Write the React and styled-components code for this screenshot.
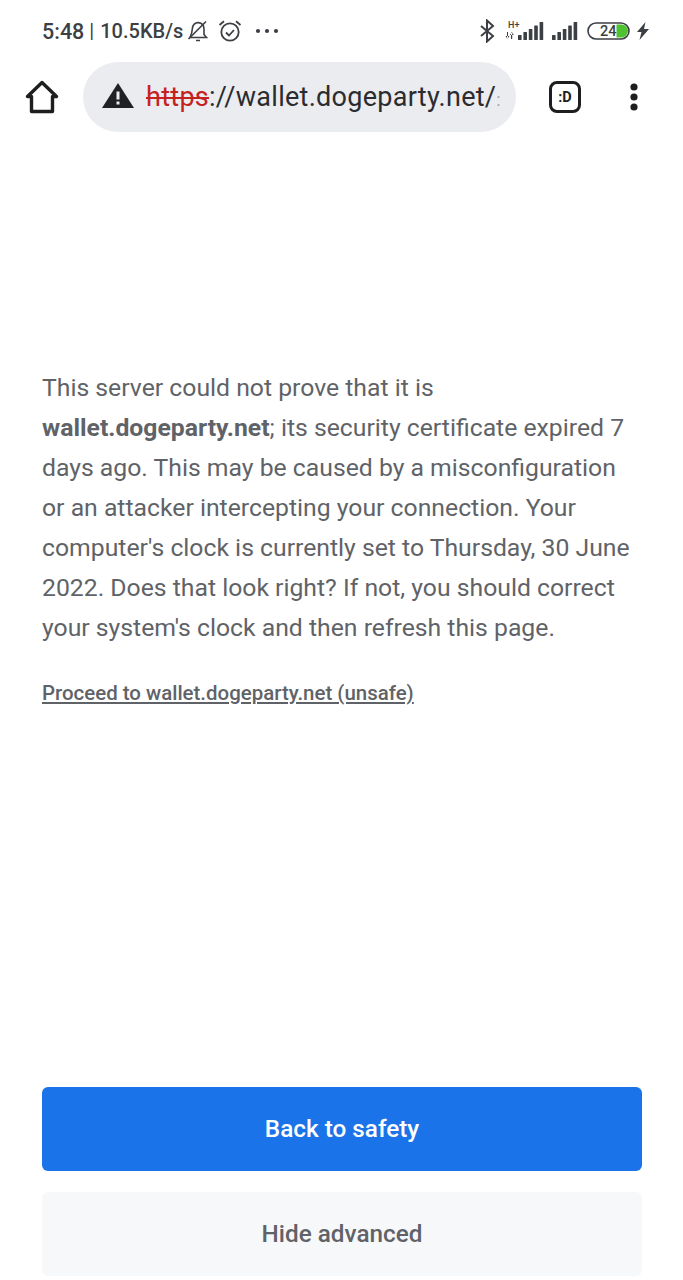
import React from "react";
import styled, { createGlobalStyle } from "styled-components";

const Global = createGlobalStyle`
  html, body { margin: 0; padding: 0; background: #fff; }
  body { font-family: Roboto, "Liberation Sans", sans-serif; }
`;
const Page = styled.div`
  width: 683px; height: 1280px; display: flex; flex-direction: column; overflow: hidden; background: #fff;
`;
const StatusBar = styled.div`
  height: 62px; flex: none; display: flex; align-items: center; justify-content: space-between;
  padding: 0 33px 0 42px; color: #3c3f43; box-sizing: border-box;
`;
const StatusLeft = styled.div`
  display: flex; align-items: center; font-size: 20px; font-weight: 500; white-space: nowrap;
`;
const Clock = styled.span`font-size: 21.5px;`;
const Sep = styled.span`font-weight: 400; margin: 0 6px 0 5px;`;
const StatusRight = styled.div`display: flex; align-items: center;`;
const Icon = styled.svg`
  flex: none; display: block;
  margin-left: ${p => p.$ml || 0}px;
`;
const Toolbar = styled.div`
  height: 70px; flex: none; display: flex; align-items: center; box-sizing: border-box; padding-left: 25px;
`;
const Omnibox = styled.div`
  width: 433px; height: 70px; margin-left: 24px; background: #ebecf0; border-radius: 35px;
  display: flex; align-items: center; padding-left: 19px; box-sizing: border-box; flex: none;
`;
const Url = styled.div`
  font-size: 27px; color: #2a2c2f; margin-left: 12px; white-space: nowrap; letter-spacing: 0.28px;
`;
const Scheme = styled.span`color: #c5221f; text-decoration: line-through; text-decoration-thickness: 2px;`;
const UrlFade = styled.span`color: #a9abaf; font-size: 18px;`;
const TabButton = styled.div`
  width: 32px; height: 32px; margin-left: 33px; border: 3.5px solid #1c1e20; border-radius: 8px; box-sizing: border-box;
  display: flex; align-items: center; justify-content: center; font-size: 14.5px; font-weight: 700; color: #1c1e20; flex: none;
`;
const Content = styled.main`
  flex: 1; display: flex; flex-direction: column; padding: 236px 41px 4px 42px; min-height: 0;
`;
const Paragraph = styled.p`
  margin: 0; font-size: 24.76px; line-height: 40px; color: #5f6368; white-space: nowrap;
`;
const ProceedLink = styled.a`
  margin-top: 31px; font-size: 20.45px; line-height: 28px; color: #5f6368; text-decoration: underline; font-weight: 500;
  align-self: flex-start;
`;
const Spacer = styled.div`flex: 1;`;
const Button = styled.button`
  width: 600px; height: 84px; flex: none; border: 0; border-radius: 6px; padding: 0 0 2px; font-family: inherit;
  font-size: 24.3px; font-weight: 500;
  background: ${p => (p.$primary ? "#1a73e8" : "#f7f8fa")};
  color: ${p => (p.$primary ? "#fff" : "#5f6368")};
  margin-top: ${p => (p.$primary ? "0" : "21px")};
`;

const Bell = () => (
  <Icon $ml={4} width="22" height="24" viewBox="0 0 22 24" fill="none" stroke="#3c3f43" strokeWidth="1.6">
    <path d="M3 18.5h16.5l-2.5-3V10c0-3.5-2.3-6-5.5-6.4C8 3.4 5.6 6 5.4 9.5c-.2 3-1 6-2.4 9z" />
    <path d="M9 21.5h4M1.5 20 19 2.5" />
  </Icon>
);
const Alarm = () => (
  <Icon $ml={9} width="24" height="24" viewBox="0 0 24 24" fill="none" stroke="#3c3f43" strokeWidth="1.8">
    <circle cx="12" cy="13" r="8.7" />
    <path d="M8 13.5l3 3 5-5.5M1.5 6 6 2.2M22.5 6 18 2.2" />
  </Icon>
);
const Dots = () => (
  <Icon $ml={13} width="24" height="6" viewBox="0 0 24 6" fill="#3c3f43">
    <circle cx="3" cy="3" r="2.1" /><circle cx="12" cy="3" r="2.1" /><circle cx="21" cy="3" r="2.1" />
  </Icon>
);
const Bluetooth = () => (
  <Icon width="16" height="24" viewBox="0 0 16 24" fill="none" stroke="#3c3f43" strokeWidth="2">
    <path d="M2 7l12 10-6 5.5V1.5L14 7 2 17" />
  </Icon>
);
const bars = (x0) => [[0, 14], [5.4, 11], [10.8, 8], [16.2, 4.5], [21.6, 1]].map(([x, y]) => (
  <rect key={x} x={x0 + x} y={y} width="3.6" height={19 - y} rx="0.6" />
));
const SignalH = () => (
  <Icon $ml={10} width="39" height="20" viewBox="0 0 39 20" fill="#3c3f43">
    <text x="3" y="7" fontSize="9" fontWeight="500" fontFamily="Roboto">H+</text>
    <path d="M2 11v7h1v-7zM0.5 15h4L2.5 18zM6 11v7h1.2v-7zM4.8 14l2-3 2 3z" />
    <g>{bars(13)}</g>
  </Icon>
);
const Signal = () => (
  <Icon $ml={7} width="27" height="20" viewBox="0 0 27 20" fill="#3c3f43">
    <g>{bars(1)}</g>
  </Icon>
);
const Battery = () => (
  <Icon $ml={9} width="43" height="20" viewBox="0 0 43 20">
    <rect x="1" y="2" width="41" height="16" rx="8" fill="none" stroke="#3c3f43" strokeWidth="1.6" />
    <path d="M29.5 3.5h5a6.5 6.5 0 0 1 0 13h-5z" fill="#4fc22f" />
    <text x="13" y="15" fontSize="14.5" fontWeight="500" fontFamily="Roboto" fill="#3c3f43">24</text>
  </Icon>
);
const Bolt = () => (
  <Icon $ml={6} width="14" height="18" viewBox="0 0 14 18" fill="#3c3f43">
    <path d="M9.5 0 1 10h4.5L3.5 18 13 7H8z" />
  </Icon>
);
const Home = () => (
  <Icon width="34" height="34" viewBox="0 0 34 34" fill="none" stroke="#1c1e20" strokeWidth="3.4" strokeLinejoin="round">
    <path d="M2.5 16.5 17 2.5l14.5 14H27.5v15h-21v-15z" />
  </Icon>
);
const Warning = () => (
  <Icon width="32" height="28" viewBox="0 0 32 28">
    <path d="M16 0 32 25H0z" fill="#1f2124" />
    <rect x="14.5" y="8.5" width="3" height="8" fill="#ebecf0" />
    <rect x="14.5" y="18.5" width="3" height="3" fill="#ebecf0" />
  </Icon>
);
const Kebab = () => (
  <Icon $ml={47} width="12" height="30" viewBox="0 0 12 30" fill="#1c1e20">
    <circle cx="6" cy="5" r="3.6" /><circle cx="6" cy="15" r="3.6" /><circle cx="6" cy="25" r="3.6" />
  </Icon>
);

export default function App() {
  return (
    <Page>
      <Global />
      <StatusBar>
        <StatusLeft>
          <Clock>5:48</Clock><Sep>|</Sep>10.5KB/s
          <Bell /><Alarm /><Dots />
        </StatusLeft>
        <StatusRight>
          <Bluetooth /><SignalH /><Signal /><Battery /><Bolt />
        </StatusRight>
      </StatusBar>
      <Toolbar>
        <Home />
        <Omnibox>
          <Warning />
          <Url><Scheme>https</Scheme>://wallet.dogeparty.net/<UrlFade>:</UrlFade></Url>
        </Omnibox>
        <TabButton>:D</TabButton>
        <Kebab />
      </Toolbar>
      <Content>
        <Paragraph>
          This server could not prove that it is<br />
          <b>wallet.dogeparty.net</b>; its security certificate expired 7<br />
          days ago. This may be caused by a misconfiguration<br />
          or an attacker intercepting your connection. Your<br />
          computer's clock is currently set to Thursday, 30 June<br />
          2022. Does that look right? If not, you should correct<br />
          your system's clock and then refresh this page.
        </Paragraph>
        <ProceedLink>Proceed to wallet.dogeparty.net (unsafe)</ProceedLink>
        <Spacer />
        <Button $primary>Back to safety</Button>
        <Button>Hide advanced</Button>
      </Content>
    </Page>
  );
}
